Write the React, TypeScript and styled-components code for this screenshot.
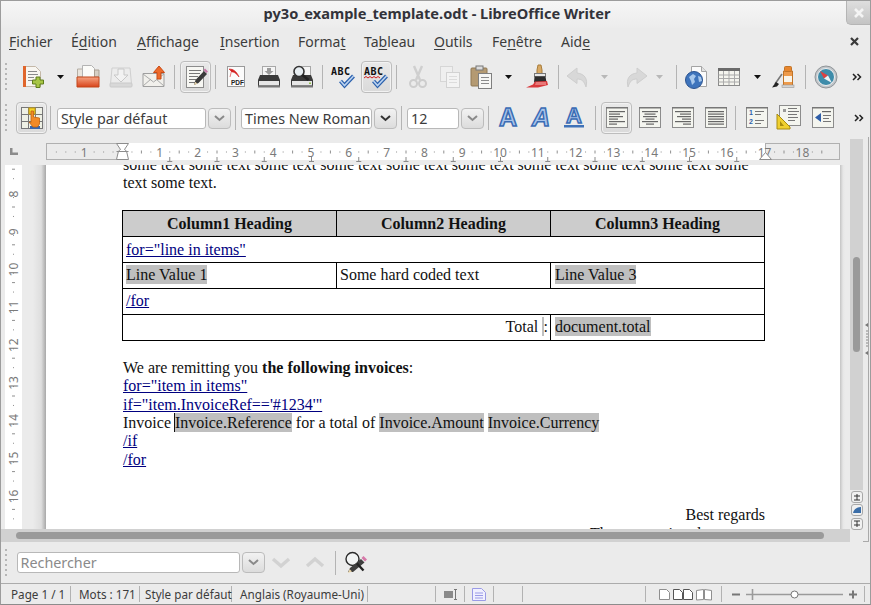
import React from 'react';
import styled, { createGlobalStyle } from 'styled-components';

const UI_FONT = `"Noto Sans", "Open Sans", sans-serif`;

const GlobalStyle = createGlobalStyle`
  html, body {
    margin: 0;
    padding: 0;
    background: #ebebeb;
    overflow: hidden;
  }
`;

const Window = styled.div`
  width: 871px;
  height: 605px;
  box-sizing: border-box;
  border: 1px solid #9c9c9c;
  border-bottom-color: #8c8c8c;
  display: flex;
  flex-direction: column;
  background: #ebebeb;
  font-family: ${UI_FONT};
  overflow: hidden;
`;

const TitleBar = styled.div`
  height: 27px;
  flex: none;
  display: flex;
  align-items: flex-start;
  background: linear-gradient(#f6f6f6, #ececec);
`;

const Title = styled.div`
  flex: 1;
  padding-left: 27px;
  height: 25px;
  line-height: 25px;
  text-align: center;
  font-size: 14.6px;
  font-weight: 700;
  color: #33333a;
`;

const CloseWindow = styled.div`
  width: 24px;
  height: 24px;
  flex: none;
  display: flex;
  align-items: center;
  justify-content: center;
  background: linear-gradient(#dedede, #c4c4c4);
  border-left: 1px solid #b5b5b5;
  border-bottom: 1px solid #b5b5b5;
  border-bottom-left-radius: 5px;
  box-sizing: border-box;
`;

const MenuBar = styled.div`
  height: 28px;
  flex: none;
  box-sizing: border-box;
  padding: 0 0 2px 8px;
  display: flex;
  align-items: center;
`;

const MenuItem = styled.div<{ $w: number }>`
  width: ${(p) => p.$w}px;
  flex: none;
  font-size: 14px;
  color: #3c3c3c;
  white-space: nowrap;
  u {
    text-underline-offset: 2px;
  }
`;

const MenuSpacer = styled.div`
  flex: 1;
`;

const MenuClose = styled.div`
  width: 24px;
  display: flex;
  justify-content: flex-start;
  padding-left: 4px;
  box-sizing: border-box;
`;

const ToolRow = styled.div<{ $h: number; $top?: number }>`
  height: ${(p) => p.$h}px;
  flex: none;
  box-sizing: border-box;
  display: flex;
  align-items: center;
  padding: ${(p) => p.$top ?? 0}px 0 0 4px;
  overflow: hidden;
`;

const Grip = styled.div<{ $w?: number }>`
  width: 2px;
  height: 28px;
  flex: none;
  margin-right: ${(p) => p.$w ?? 9.5}px;
  background: repeating-linear-gradient(#b6b6b6 0 2px, transparent 2px 5px);
`;

const Tool = styled.div<{ $w: number }>`
  width: ${(p) => p.$w}px;
  flex: none;
  display: flex;
  align-items: center;
  justify-content: center;
`;

const Toggled = styled.div`
  width: 31px;
  height: 32px;
  box-sizing: border-box;
  flex: none;
  display: flex;
  align-items: center;
  justify-content: center;
  border: 1px solid #bdbdbd;
  border-radius: 4px;
  background: linear-gradient(#e9e9e9, #dadada);
  box-shadow: inset 0 0 0 1px #f2f2f2;
`;

const Sep = styled.div<{ $w: number; $h?: number }>`
  width: ${(p) => p.$w}px;
  height: ${(p) => p.$h ?? 24}px;
  flex: none;
  background: linear-gradient(#b4b4b4, #b4b4b4) center / 1px 100% no-repeat;
`;

const Combo = styled.div<{ $w: number; $muted?: boolean }>`
  width: ${(p) => p.$w}px;
  height: 21px;
  box-sizing: border-box;
  flex: none;
  background: #fff;
  border: 1px solid #b8b8b8;
  border-radius: 3px;
  padding-left: 3px;
  font-size: 14.35px;
  line-height: 20px;
  color: ${(p) => (p.$muted ? '#8a8a8a' : '#3c3c3c')};
  white-space: nowrap;
  overflow: hidden;
`;

const ComboButton = styled.div<{ $ml?: number }>`
  width: 23px;
  height: 21px;
  box-sizing: border-box;
  flex: none;
  margin-left: ${(p) => p.$ml ?? 2}px;
  display: flex;
  align-items: center;
  justify-content: center;
  border: 1px solid #bcbcbc;
  border-radius: 4px;
  background: linear-gradient(#f2f2f2, #dcdcdc);
`;

const Editor = styled.div`
  flex: none;
  height: 405px;
  display: flex;
`;

const Workspace = styled.div`
  width: 849px;
  flex: none;
  display: flex;
  flex-direction: column;
`;

const RulerRow = styled.div`
  height: 28px;
  flex: none;
  display: flex;
`;

const RulerCorner = styled.div`
  width: 45px;
  flex: none;
  padding: 11px 0 0 9px;
  box-sizing: border-box;
`;

const DocRow = styled.div`
  height: 364px;
  flex: none;
  display: flex;
`;

const RulerGutter = styled.div`
  width: 4px;
  flex: none;
`;

const LeftShade = styled.div`
  width: 24px;
  flex: none;
  background: linear-gradient(90deg, #ebebeb 0 45%, #dedede 80%, #a8a8a8 100%);
`;

const Page = styled.div`
  width: 794px;
  flex: none;
  box-sizing: border-box;
  padding: 0 75px 0 77px;
  background: #fff;
  overflow: hidden;
  font-family: 'Liberation Serif', 'Times New Roman', serif;
  font-size: 16px;
  line-height: 18.4px;
  color: #111;
`;

const RightShade = styled.div`
  flex: 1;
  background: linear-gradient(90deg, #c4c4c4, #e6e6e6 3px, #ebebeb 5px);
`;

const Para = styled.div<{ $top?: number; $right?: boolean }>`
  margin-top: ${(p) => p.$top ?? 0}px;
  text-align: ${(p) => (p.$right ? 'right' : 'left')};
  white-space: nowrap;
`;

const DocTable = styled.table`
  width: 642px;
  margin: 17px 0 0 -1px;
  border-collapse: collapse;
  table-layout: fixed;
`;

const Col = styled.col<{ $w: number }>`
  width: ${(p) => p.$w}px;
`;

const HeadCell = styled.th`
  height: 26px;
  padding: 2px 4px 0;
  box-sizing: border-box;
  border: 1px solid #000;
  background: #cccccc;
  font-weight: 700;
  text-align: center;
`;

const BodyCell = styled.td<{ $right?: boolean; $inset?: number; $drop?: number }>`
  height: 26px;
  box-sizing: border-box;
  padding: ${(p) => p.$drop ?? 0}px ${(p) => (p.$right ? 2 : 3)}px 0 ${(p) => p.$inset ?? 3}px;
  border: 1px solid #000;
  text-align: ${(p) => (p.$right ? 'right' : 'left')};
  white-space: nowrap;
`;

const Field = styled.span<{ $caret?: boolean }>`
  background: #bfbfbf;
  padding: 1px 0;
  ${(p) => (p.$caret ? 'border-left: 1px solid #111; margin-left: -1px;' : '')}
`;

const Hint = styled.a`
  color: #000080;
  text-decoration: underline;
`;

const HScroll = styled.div`
  height: 13px;
  flex: none;
  box-sizing: border-box;
  padding: 3px 26px 3px 15px;
  background: #d1d1d1;
`;

const Thumb = styled.div`
  height: 7px;
  border-radius: 4px;
  background: #9a9a9a;
`;

const VBar = styled.div`
  flex: 1;
  display: flex;
`;

const VColumn = styled.div`
  width: 13px;
  flex: none;
  padding-top: 2px;
  display: flex;
  flex-direction: column;
  align-items: center;
`;

const VTrack = styled.div`
  width: 13px;
  height: 351px;
  flex: none;
  box-sizing: border-box;
  padding: 118px 3px 0;
  background: #d1d1d1;
`;

const VThumb = styled.div`
  height: 95px;
  border-radius: 4px;
  background: #9a9a9a;
`;

const ScrollStep = styled.div<{ $top?: number }>`
  width: 12px;
  height: 12px;
  box-sizing: border-box;
  flex: none;
  margin-top: ${(p) => p.$top ?? 1}px;
  display: flex;
  align-items: center;
  justify-content: center;
  border: 1px solid #a8a8a8;
  border-radius: 3px;
  background: #f0f0f0;
`;

const SplitEdge = styled.div`
  flex: 1;
  height: 404px;
  display: flex;
  align-items: center;
  padding-left: 1px;
  border-right: 1px solid #a9a9a9;
  border-bottom: 1px solid #a9a9a9;
  border-bottom-right-radius: 1px;
  margin-right: 1px;
`;

const FindBar = styled.div`
  height: 41px;
  flex: none;
  display: flex;
  align-items: center;
  padding-left: 4px;
`;

const StatusBar = styled.div`
  height: 21px;
  flex: none;
  display: flex;
  align-items: center;
  box-sizing: border-box;
  border-top: 1px solid #ababab;
  padding-left: 2px;
  font-size: 11.7px;
  color: #3c3c3c;
`;

const StatusCell = styled.div<{ $w: number; $pad?: number; $center?: boolean }>`
  width: ${(p) => p.$w}px;
  height: 16px;
  box-sizing: border-box;
  flex: none;
  display: flex;
  align-items: center;
  justify-content: ${(p) => (p.$center ? 'center' : 'flex-start')};
  gap: 3px;
  padding-left: ${(p) => p.$pad ?? 0}px;
  line-height: 16px;
  white-space: nowrap;
  border-right: 1px solid #b2b2b2;
`;

/* icons, all drawn in a 24 box unless told otherwise */
const Svg = styled.svg`
  display: block;
  flex: none;
  overflow: visible;
`;

const Ic: React.FC<{ w?: number; h?: number; children: React.ReactNode }> = ({ w = 24, h = 24, children }) => (
  <Svg width={w} height={h} viewBox={`0 0 ${w} ${h}`}>
    {children}
  </Svg>
);

const hlines = (x: number, ys: number[], len: number | number[], color = '#8a8a8a') =>
  ys.map((y, i) => (
    <rect key={y} x={x} y={y} width={Array.isArray(len) ? len[i % len.length] : len} height={1} fill={color} />
  ));

const NewDoc = () => (
  <Ic>
    <path d="M2.5 1.5h12l5 5v15h-17z" fill="#f8f6f1" stroke="#c4b8a8" />
    <rect x="2" y="1" width="3" height="21" fill="#e0662c" />
    {hlines(7, [6, 9, 12, 15], [9, 10, 6, 4])}
    <path d="M15 12h4v3h3.5v4H19v3.5h-4V19h-3.5v-4H15z" fill="#a7c645" stroke="#5f7d1c" />
  </Ic>
);

const OpenFolder = () => (
  <Ic>
    <path d="M1.5 4h6v8h-6z" fill="#e9e4dc" stroke="#b5aea4" />
    <path d="M6.5 0.5h9l3 3v10h-12z" fill="#fbfbf8" stroke="#b3b3b3" />
    <path d="M18.5 5h4.5v7h-4.5z" fill="#d6cfc4" stroke="#a99f91" />
    <path d="M1 12h22v10H1z" fill="url(#fold)" stroke="#c2461b" />
    <defs>
      <linearGradient id="fold" x1="0" y1="0" x2="0" y2="1">
        <stop offset="0" stopColor="#f6a482" />
        <stop offset="1" stopColor="#d8431a" />
      </linearGradient>
    </defs>
  </Ic>
);

const SaveGhost = () => (
  <Ic>
    <path d="M3 3h18l1.5 16h-21z" fill="#ececec" stroke="#cfcfcf" />
    <path d="M9 4h6v6h4l-7 7-7-7h4z" fill="#f2f2f2" stroke="#c8c8c8" />
    <rect x="1" y="18" width="22" height="4" rx="1" fill="#d8d8d8" stroke="#cacaca" />
  </Ic>
);

const MailUp = () => (
  <Ic>
    <path d="M1 8.5h21v13H1z" fill="#f1f0ec" stroke="#9f9f9f" />
    <path d="M1 21l8-7M22 21l-8-7M1 9l10.5 8L22 9" fill="none" stroke="#a9a9a9" />
    <path d="M15 14V7.5h-3.5L17 1l5.5 6.5H19V14z" fill="#ee6a2a" stroke="#c94a15" />
  </Ic>
);

const EditPage = () => (
  <Ic>
    <rect x="2.5" y="1.5" width="17" height="21" fill="#f7f7f3" stroke="#8c8c8c" />
    {hlines(5, [5, 8, 11, 14, 17], [12, 11, 9, 7, 6], '#777')}
    <path d="M10 20l1.5-5L20 6l3 3-8.5 9z" fill="#3a3a3a" />
    <path d="M19.5 5l1.5-1.5 3 3L22.5 8z" fill="#c678a8" />
    <path d="M10 20l1.3-3.2 2 2z" fill="#e8d4a8" />
  </Ic>
);

const PdfPage = () => (
  <Ic>
    <rect x="3.5" y="1.5" width="17" height="20" fill="#fbfbfb" stroke="#9a9a9a" />
    <path d="M5 4c5 0 8 3 10 8-3-4-5-5-7-5zM8 4l-2 8" fill="#d42020" stroke="#d42020" strokeWidth=".6" />
    <text x="7" y="20" fontFamily="Liberation Sans" fontSize="6.5" fontWeight="700" fill="#222">
      PDF
    </text>
  </Ic>
);

const Printer = () => (
  <Ic>
    <rect x="5.5" y="1.5" width="13" height="10" fill="#f5f5f5" stroke="#a8a8a8" />
    <path d="M10 3h4v3h2.5L12 10 7.5 6H10z" fill="#9a9a9a" />
    <path d="M3 10h18l2 5v6H1v-6z" fill="#3a3a3a" />
    <rect x="2" y="16" width="20" height="4.5" fill="#e6e6e6" />
    <rect x="1" y="20.5" width="22" height="2" fill="#777" />
  </Ic>
);

const PrintPreview = () => (
  <Ic>
    <rect x="7.5" y="1.5" width="13" height="10" fill="#f5f5f5" stroke="#a8a8a8" />
    <path d="M3 10h18l2 5v6H1v-6z" fill="#3a3a3a" />
    <rect x="2" y="16" width="20" height="4.5" fill="#e6e6e6" />
    <rect x="1" y="20.5" width="22" height="2" fill="#777" />
    <rect x="19" y="17.5" width="2" height="1.5" fill="#8fc04a" />
    <circle cx="9" cy="6.5" r="5" fill="#e8eef2" stroke="#333" strokeWidth="1.6" />
    <path d="M12.5 10l6 5" stroke="#222" strokeWidth="2.6" />
  </Ic>
);

const CheckMark = () => (
  <>
    <path d="M9.5 16l4 4.5L22.5 11" fill="none" stroke="#2c62ae" strokeWidth="4" />
    <path d="M9.5 16l4 4.5L22.5 11" fill="none" stroke="#bcd3f0" strokeWidth="1.6" />
  </>
);

const Spell = ({ wave }: { wave?: boolean }) => (
  <Ic>
    <text x="0" y="10" fontFamily="DejaVu Sans Mono" fontSize="10" fontWeight="700" fill="#111" textLength="19">
      ABC
    </text>
    {wave && <path d="M0 13l2-1.5 2 1.5 2-1.5 2 1.5 2-1.5 2 1.5 2-1.5 2 1.5" fill="none" stroke="#d02020" />}
    <CheckMark />
  </Ic>
);

const Scissors = () => (
  <Ic>
    <path d="M8 1l6 14M16 1l-6 14" stroke="#cfcfcf" strokeWidth="2.4" fill="none" />
    <circle cx="7.5" cy="18.5" r="3.5" fill="none" stroke="#cdcdcd" strokeWidth="2" />
    <circle cx="16.5" cy="18.5" r="3.5" fill="none" stroke="#cdcdcd" strokeWidth="2" />
  </Ic>
);

const CopyGhost = () => (
  <Ic>
    <rect x="2.5" y="1.5" width="12" height="15" fill="#efefef" stroke="#d6d6d6" />
    <rect x="8.5" y="7.5" width="13" height="15" fill="#f3f3f3" stroke="#d2d2d2" />
    {hlines(11, [11, 14, 17], 8, '#dcdcdc')}
  </Ic>
);

const Paste = () => (
  <Ic>
    <rect x="1" y="3" width="16" height="18" rx="1" fill="#b49a72" stroke="#8f7854" />
    <rect x="6" y="1" width="7" height="4" fill="#dcdcdc" stroke="#777" />
    <rect x="8.5" y="8.5" width="13" height="15" fill="#f6f6f4" stroke="#7f7f7f" />
    {hlines(11, [12, 15, 18], 8, '#8a8a8a')}
  </Ic>
);

const Brush = () => (
  <Ic>
    <path d="M12 0h3l1 5v4h-5V5z" fill="#d8a964" stroke="#a87c3a" />
    <rect x="8.5" y="8.5" width="11" height="3" fill="#e8e8e8" stroke="#777" />
    <path d="M8.5 11.5h11l1 6H8z" fill="#2d2d2d" />
    <path d="M21 16l1 4-10 2.5H0l7-3 2-3z" fill="#d9393c" />
    <path d="M10 17h10v3H9z" fill="#e87878" />
  </Ic>
);

const ArrowGhost = ({ flip }: { flip?: boolean }) => (
  <Ic>
    <g transform={flip ? 'translate(24 0) scale(-1 1)' : undefined}>
      <path d="M11 3L1 11l10 7.5V14c5 0 7 2 9 8 2-8-1-13-9-14z" fill="#d8d8d8" stroke="#cecece" />
    </g>
  </Ic>
);

const GlobeDoc = () => (
  <Ic>
    <path d="M6.5 1.5h10l5 5v15h-15z" fill="#fbfbfb" stroke="#a4a4a4" />
    <path d="M16.5 1.5v5h5" fill="#e2e2e2" stroke="#a4a4a4" />
    <circle cx="9" cy="15" r="8.5" fill="#3e74bc" stroke="#2b5390" />
    <path d="M4 12l4-3 3 2-2 3 1 3-3 3-1-4zM13 11l3 1 1 4-3 1z" fill="#a8c8ec" />
  </Ic>
);

const TableGrid = () => (
  <Ic>
    <rect x="1.5" y="3.5" width="21" height="17" fill="#f4f4ee" stroke="#8a8a8a" />
    <rect x="1" y="3" width="22" height="3" fill="#6a6a6a" />
    <path d="M1.5 10h21M1.5 13.5h21M1.5 17h21M6.5 6v14M12 6v14M17.5 6v14" stroke="#aaa" />
  </Ic>
);

const Navigator = () => (
  <Ic>
    <path d="M11.5 6h9v15h-9z" fill="#ee9a4a" stroke="#c07428" />
    <rect x="12.5" y="1.5" width="7" height="5" rx="1" fill="#e8862e" stroke="#c07428" />
    <rect x="12" y="11" width="8" height="6" fill="#f8f4ea" />
    <rect x="10" y="20" width="12" height="2.5" fill="#d4d4d4" stroke="#999" strokeWidth=".6" />
    <path d="M10 9L3 19" stroke="#777" strokeWidth="1.6" />
    <path d="M4 17l3 2-2 2.5-5 1z" fill="#222" />
  </Ic>
);

const Compass = () => (
  <Ic>
    <circle cx="12" cy="12" r="11" fill="#c2c6ca" stroke="#8f9498" />
    <circle cx="12" cy="12" r="8.5" fill="#3e8caa" stroke="#f0f0f0" />
    <path d="M6 6l8 4.5-4 3z" fill="#e04040" />
    <path d="M18 18l-8-4.5 4-3z" fill="#eef2f4" />
  </Ic>
);

const Chevrons = () => (
  <Ic w={10} h={8}>
    <path d="M1 1l3 3-3 3M5.5 1l3 3-3 3" fill="none" stroke="#222" strokeWidth="1.5" />
  </Ic>
);

const DropArrow = ({ ghost }: { ghost?: boolean }) => (
  <Ic w={8} h={4}>
    <path d="M0 0h7L3.5 4z" fill={ghost ? '#b8b8b8' : '#111'} />
  </Ic>
);

const Chevron = ({ color = '#8a8a8a' }: { color?: string }) => (
  <Ic w={11} h={7}>
    <path d="M1 1l4.5 4L10 1" fill="none" stroke={color} strokeWidth="2" />
  </Ic>
);

const FatChevron = ({ up }: { up?: boolean }) => (
  <Ic w={18} h={11}>
    <path d={up ? 'M1 9l8-7 8 7' : 'M1 2l8 7 8-7'} fill="none" stroke="#d2d2d2" strokeWidth="3.4" />
  </Ic>
);

const StyleHand = () => (
  <Ic>
    <rect x="1.5" y="1.5" width="21" height="21" fill="#eef0e4" stroke="#777" />
    <path d="M1.5 8.5h21M1.5 15.5h21M8.5 1.5v21M15.5 1.5v21" stroke="#777" />
    <rect x="9" y="2" width="6" height="6" fill="#f5d42a" stroke="#c8a010" />
    <rect x="10" y="20" width="10" height="3" fill="#3b67ac" />
    <path d="M11 5h2.5v6l6 1v6l-2 3H13l-4-5 2 .5z" fill="#f28a28" stroke="#c2620e" strokeWidth=".8" />
  </Ic>
);

const LetterA = ({ italic, under }: { italic?: boolean; under?: boolean }) => (
  <Ic>
    <text
      x="12"
      y={under ? 17 : 20}
      textAnchor="middle"
      fontFamily="Liberation Sans"
      fontWeight="700"
      fontStyle={italic ? 'italic' : 'normal'}
      fontSize={under ? 22 : 25}
      fill="#a9c4ea"
      stroke="#3a6cb4"
      strokeWidth="1.5"
    >
      A
    </text>
    {under && <rect x="2" y="19" width="20" height="2.5" fill="#3f72b8" />}
  </Ic>
);

const PageFrame: React.FC<{ children: React.ReactNode }> = ({ children }) => (
  <Ic w={22} h={22}>
    <rect x="0.5" y="0.5" width="21" height="20" fill="#f4f5ef" stroke="#8c8c8c" />
    <rect x="0" y="0" width="22" height="1.5" fill="#777" />
    {children}
  </Ic>
);

const Align = ({ mode }: { mode: 'left' | 'center' | 'right' | 'fill' }) => {
  const lens = mode === 'fill' ? [16, 16, 16, 16, 16, 16] : [16, 11, 14, 9, 16, 8];
  return (
    <PageFrame>
      {lens.map((l, i) => (
        <rect
          key={i}
          x={mode === 'left' || mode === 'fill' ? 3 : mode === 'right' ? 19 - l : 11 - l / 2}
          y={4 + i * 2.5}
          width={l}
          height={1.2}
          fill="#666"
        />
      ))}
    </PageFrame>
  );
};

const Numbered = () => (
  <PageFrame>
    <text x="3" y="8" fontFamily="Liberation Sans" fontSize="7" fontWeight="700" fill="#2f5ea8">1</text>
    <text x="3" y="17" fontFamily="Liberation Sans" fontSize="7" fontWeight="700" fill="#2f5ea8">2</text>
    {hlines(9, [4, 7, 13, 16], [9, 6, 9, 6], '#777')}
  </PageFrame>
);

const Bulleted = () => (
  <Svg width="26" height="26" viewBox="0 0 26 26">
    <rect x="3.5" y="0.5" width="21" height="20" fill="#f4f5ef" stroke="#8c8c8c" />
    <rect x="7" y="4" width="3" height="3" fill="#999" />
    {hlines(12, [3, 6, 9, 12, 15], [9, 11, 9, 10, 7], '#777')}
    <path d="M1 9l13 13v2H1z" fill="#f0d030" stroke="#a88c10" />
    <path d="M4 16l4 5H4z" fill="#a88c10" />
  </Svg>
);

const Outdent = () => (
  <PageFrame>
    <path d="M3 10.5L9 6v9z" fill="#2f5ea8" />
    <rect x="10" y="4" width="9" height="1.2" fill="#666" />
    {hlines(11, [8, 11, 14], [8, 6, 8], '#777')}
  </PageFrame>
);

const FindPencil = () => (
  <Ic>
    <circle cx="8.5" cy="8" r="6.5" fill="#f2f4f4" stroke="#2b2b2b" strokeWidth="1.4" />
    <path d="M4 21l2-4L17 8l3.5 3.5L9 21z" fill="#3f3f3f" />
    <path d="M17.5 7l2-2 3.5 3.5-2 2z" fill="#d678a8" />
    <path d="M4 22l1.5-4 2.5 2.5z" fill="#e8d4a8" />
    <path d="M13 12.5l6.5 7" stroke="#222" strokeWidth="2.4" />
  </Ic>
);

const CloseX = ({ color, size = 9, weight = 2.2 }: { color: string; size?: number; weight?: number }) => (
  <Ic w={size} h={size}>
    <path d={`M1 1l${size - 2} ${size - 2}M${size - 1} 1L1 ${size - 1}`} stroke={color} strokeWidth={weight} />
  </Ic>
);

const RULER_0 = 76; // x of the text margin inside the horizontal ruler
const CM = 37.8;

const HRuler = () => {
  const labels: { n: number; at: number }[] = [{ n: 1, at: -1 }];
  for (let i = 1; i <= 18; i++) labels.push({ n: i, at: i });
  const dots: number[] = [];
  for (let q = -8; q <= 74; q++) if (q % 4 !== 0) dots.push(q / 4);
  const tabs: number[] = [];
  for (let t = 1; t <= 13; t++) tabs.push(t * 1.25);
  return (
    <Svg width="795" height="28" viewBox="0 0 795 28">
      <rect x="0.5" y="6.5" width="76" height="16" fill="#ebebeb" stroke="#b0b0b0" />
      <rect x="719.5" y="6.5" width="74" height="16" fill="#ebebeb" stroke="#b0b0b0" />
      <rect x="76" y="6" width="643" height="17" fill="#fff" />
      {dots.map((d) => (
        <rect
          key={d}
          x={RULER_0 + d * CM}
          y={d % 1 === 0.5 ? 13.5 : 14.5}
          width="1"
          height={d % 1 === 0.5 ? 3 : 1}
          fill="#8f8f8f"
        />
      ))}
      {tabs.map((t) => (
        <path key={t} d={`M${RULER_0 + t * CM - 2} 24.5h5M${RULER_0 + t * CM + 0.5} 20v4`} stroke="#8a8a8a" fill="none" />
      ))}
      {labels.map((l) => (
        <text
          key={l.at}
          x={RULER_0 + l.at * CM}
          y="19.5"
          textAnchor="middle"
          fontFamily={UI_FONT}
          fontSize="12"
          fill="#7a7a7a"
        >
          {l.n}
        </text>
      ))}
      <path d="M70.5 6.5h12l-4 6 2 1.5 2 8.5h-12l2-8.5 2-1.5z" fill="#fff" stroke="#8c8c8c" />
      <path d="M70.5 14.5h12" stroke="#8c8c8c" />
      <path d="M713.5 22.5l6-7 6 7z" fill="#fff" stroke="#8c8c8c" />
    </Svg>
  );
};

const VRuler = () => {
  const nums = [8, 9, 10, 11, 12, 13, 14, 15, 16];
  const dots: number[] = [];
  for (let y = 6; y < 364; y += 9.45) dots.push(y);
  return (
    <Svg width="17" height="364" viewBox="0 0 17 364">
      <rect width="17" height="364" fill="#fff" />
      {dots.map((y, i) => (
        <rect
          key={y}
          x={i % 2 === 0 ? 7 : 8}
          y={y - 6 + 3.7}
          width={i % 2 === 0 ? 3 : 1}
          height="1"
          fill={i % 4 === 2 ? 'transparent' : '#8f8f8f'}
        />
      ))}
      {nums.map((n, i) => (
        <text
          key={n}
          transform={`translate(12.5 ${29 + i * 37.8}) rotate(-90)`}
          textAnchor="middle"
          fontFamily={UI_FONT}
          fontSize="12"
          fill="#7a7a7a"
        >
          {n}
        </text>
      ))}
    </Svg>
  );
};

const SOME_TEXT = Array(9).fill('some text').join(' ') + ' some';

const App: React.FC = () => {
  return (
    <>
      <GlobalStyle />
      <Window>
        <TitleBar>
          <Title>py3o_example_template.odt - LibreOffice Writer</Title>
          <CloseWindow>
            <CloseX color="#f4f4f4" size={10} weight={2.6} />
          </CloseWindow>
        </TitleBar>

        <MenuBar>
          <MenuItem $w={62}><u>F</u>ichier</MenuItem>
          <MenuItem $w={66}>É<u>d</u>ition</MenuItem>
          <MenuItem $w={83}><u>A</u>ffichage</MenuItem>
          <MenuItem $w={78}><u>I</u>nsertion</MenuItem>
          <MenuItem $w={66}>Forma<u>t</u></MenuItem>
          <MenuItem $w={70}>Ta<u>b</u>leau</MenuItem>
          <MenuItem $w={58}><u>O</u>utils</MenuItem>
          <MenuItem $w={69}>Fe<u>n</u>être</MenuItem>
          <MenuItem $w={40}>Aid<u>e</u></MenuItem>
          <MenuSpacer />
          <MenuClose>
            <CloseX color="#3a3a3a" size={9} />
          </MenuClose>
        </MenuBar>

        <ToolRow $h={41}>
          <Grip />
          <Tool $w={33}><NewDoc /></Tool>
          <Tool $w={22}><DropArrow /></Tool>
          <Tool $w={33}><OpenFolder /></Tool>
          <Tool $w={33}><SaveGhost /></Tool>
          <Tool $w={33}><MailUp /></Tool>
          <Sep $w={7} />
          <Tool $w={36}><Toggled><EditPage /></Toggled></Tool>
          <Sep $w={3} />
          <Tool $w={39}><PdfPage /></Tool>
          <Tool $w={27}><Printer /></Tool>
          <Tool $w={39}><PrintPreview /></Tool>
          <Sep $w={1} />
          <Tool $w={40}><Spell /></Tool>
          <Tool $w={27}><Toggled><Spell wave /></Toggled></Tool>
          <Sep $w={13} />
          <Tool $w={30}><Scissors /></Tool>
          <Tool $w={35}><CopyGhost /></Tool>
          <Tool $w={28}><Paste /></Tool>
          <Tool $w={27}><DropArrow /></Tool>
          <Tool $w={31}><Brush /></Tool>
          <Sep $w={9} />
          <Tool $w={31}><ArrowGhost /></Tool>
          <Tool $w={23}><DropArrow ghost /></Tool>
          <Tool $w={38}><ArrowGhost flip /></Tool>
          <Tool $w={11}><DropArrow ghost /></Tool>
          <Sep $w={21} />
          <Tool $w={20}><GlobeDoc /></Tool>
          <Tool $w={45}><TableGrid /></Tool>
          <Tool $w={12}><DropArrow /></Tool>
          <Tool $w={41}><Navigator /></Tool>
          <Sep $w={1} />
          <Tool $w={41}><Compass /></Tool>
          <Tool $w={21}><Chevrons /></Tool>
        </ToolRow>

        <ToolRow $h={40} $top={2}>
          <Grip $w={8} />
          <Tool $w={33}><Toggled><StyleHand /></Toggled></Tool>
          <Sep $w={5} />
          <Tool $w={4} />
          <Combo $w={149}>Style par défaut</Combo>
          <ComboButton><Chevron /></ComboButton>
          <Sep $w={9} />
          <Tool $w={1} />
          <Combo $w={131}>Times New Roman</Combo>
          <ComboButton><Chevron color="#333" /></ComboButton>
          <Sep $w={9} />
          <Tool $w={1} />
          <Combo $w={52}>12</Combo>
          <ComboButton><Chevron /></ComboButton>
          <Sep $w={8} />
          <Tool $w={32}><LetterA /></Tool>
          <Tool $w={34}><LetterA italic /></Tool>
          <Tool $w={32}><LetterA under /></Tool>
          <Sep $w={10} />
          <Tool $w={33}><Toggled><Align mode="left" /></Toggled></Tool>
          <Tool $w={33}><Align mode="center" /></Tool>
          <Tool $w={33}><Align mode="right" /></Tool>
          <Tool $w={33}><Align mode="fill" /></Tool>
          <Sep $w={6} />
          <Tool $w={38}><Numbered /></Tool>
          <Tool $w={26}><Bulleted /></Tool>
          <Tool $w={42}><Outdent /></Tool>
          <Tool $w={30}><Chevrons /></Tool>
        </ToolRow>

        <Editor>
          <Workspace>
            <RulerRow>
              <RulerCorner>
                <Ic w={8} h={7}>
                  <path d="M0 0h2.5v4.5H8V7H0z" fill="#8c8c8c" />
                </Ic>
              </RulerCorner>
              <HRuler />
            </RulerRow>
            <DocRow>
              <RulerGutter />
              <VRuler />
              <LeftShade />
              <Page>
                <Para $top={-9}>{SOME_TEXT}</Para>
                <Para>text some text.</Para>
                <DocTable>
                  <colgroup>
                    <Col $w={214} />
                    <Col $w={214} />
                    <Col $w={214} />
                  </colgroup>
                  <tbody>
                    <tr>
                      <HeadCell>Column1 Heading</HeadCell>
                      <HeadCell>Column2 Heading</HeadCell>
                      <HeadCell>Column3 Heading</HeadCell>
                    </tr>
                    <tr>
                      <BodyCell colSpan={3} $drop={2}><Hint>for="line in items"</Hint></BodyCell>
                    </tr>
                    <tr>
                      <BodyCell><Field>Line Value 1</Field></BodyCell>
                      <BodyCell>Some hard coded text</BodyCell>
                      <BodyCell $inset={4}><Field>Line Value 3</Field></BodyCell>
                    </tr>
                    <tr>
                      <BodyCell colSpan={3}><Hint>/for</Hint></BodyCell>
                    </tr>
                    <tr>
                      <BodyCell colSpan={2} $right>
                        Total <Field>&#8202;</Field>:
                      </BodyCell>
                      <BodyCell $inset={4}><Field>document.total</Field></BodyCell>
                    </tr>
                  </tbody>
                </DocTable>
                <Para $top={18}>We are remitting you <b>the following invoices</b>:</Para>
                <Para><Hint>for="item in items"</Hint></Para>
                <Para><Hint>if="item.InvoiceRef=='#1234'"</Hint></Para>
                <Para>
                  Invoice <Field $caret>Invoice.Reference</Field> for a total of <Field>Invoice.Amount</Field>{' '}
                  <Field>Invoice.Currency</Field>
                </Para>
                <Para><Hint>/if</Hint></Para>
                <Para><Hint>/for</Hint></Para>
                <Para $top={37} $right>Best regards</Para>
                <Para $right>The accounting department</Para>
              </Page>
              <RightShade />
            </DocRow>
            <HScroll>
              <Thumb />
            </HScroll>
          </Workspace>
          <VBar>
            <VColumn>
              <VTrack>
                <VThumb />
              </VTrack>
              <ScrollStep $top={1}>
                <Ic w={6} h={6}><path d="M3 0v6M0 2h6M0 6h6" stroke="#333" /></Ic>
              </ScrollStep>
              <ScrollStep>
                <Ic w={8} h={6}><path d="M0 6C1 2 4 0 8 0v6z" fill="#3b6ea8" /></Ic>
              </ScrollStep>
              <ScrollStep $top={2}>
                <Ic w={6} h={6}><path d="M3 0v6M0 0h6M0 4h6" stroke="#333" /></Ic>
              </ScrollStep>
            </VColumn>
            <SplitEdge>
              <Ic w={4} h={32}>
                <path d="M4 0v4L1 2zM4 28v4l-3-2z" fill="#777" />
                <path d="M2 8h2M2 11h2M2 14h2M2 17h2M2 20h2M2 23h2" stroke="#888" />
              </Ic>
            </SplitEdge>
          </VBar>
        </Editor>

        <FindBar>
          <Grip $w={9.5} />
          <Combo $w={223} $muted>Rechercher</Combo>
          <ComboButton><Chevron /></ComboButton>
          <Tool $w={32}><FatChevron /></Tool>
          <Tool $w={36}><FatChevron up /></Tool>
          <Sep $w={6} />
          <Tool $w={35}><FindPencil /></Tool>
        </FindBar>

        <StatusBar>
          <StatusCell $w={68} $pad={8}>Page 1 / 1</StatusCell>
          <StatusCell $w={69} $pad={8}>Mots : 171</StatusCell>
          <StatusCell $w={92} $pad={5}>Style par défaut</StatusCell>
          <StatusCell $w={136} $pad={8}>Anglais (Royaume-Uni)</StatusCell>
          <StatusCell $w={68} />
          <StatusCell $w={29} $center>
            <Ic w={13} h={11}>
              <rect x="0" y="2" width="9" height="7" fill="#8a8a8a" />
              <path d="M10 0.5h3M11.5 0.5v10M10 10.5h3" stroke="#777" />
            </Ic>
          </StatusCell>
          <StatusCell $w={29} $center>
            <Ic w={15} h={13}>
              <path d="M.5.5h9l4 4v8H.5z" fill="#f0f0ff" stroke="#9a9ae6" />
              <path d="M3 5h8M3 7.5h8M3 10h8" stroke="#9a9ae6" />
            </Ic>
          </StatusCell>
          <StatusCell $w={29} />
          <StatusCell $w={123} />
          <StatusCell $w={76} $pad={13}>
            <Ic w={11} h={11}><path d="M.5.5h7l3 3v7H.5z" fill="#fff" stroke="#8f8f8f" /></Ic>
            <Ic w={20} h={11}><path d="M.5.5h6l3 3v7H.5zM10.5.5h6l3 3v7h-9z" fill="#fff" stroke="#555" /></Ic>
            <Ic w={16} h={11}><path d="M.5 1.5l7-1v10l-7 .5zM8.5 .5l7 1v9.5l-7-.5z" fill="#fff" stroke="#8f8f8f" /></Ic>
          </StatusCell>
          <StatusCell $w={143} $pad={10}>
            <Ic w={134} h={13}>
              <path d="M0 6.5h8" stroke="#777" strokeWidth="2" />
              <path d="M14 6.5h97" stroke="#9a9a9a" strokeWidth="1.4" />
              <path d="M20.5 1v11" stroke="#9a9a9a" strokeWidth="1.6" />
              <circle cx="62.5" cy="6.5" r="3.5" fill="#fff" stroke="#777" />
              <path d="M117 6.5h8M121 2.5v8" stroke="#777" strokeWidth="2" />
            </Ic>
          </StatusCell>
        </StatusBar>
      </Window>
    </>
  );
};

export default App;
